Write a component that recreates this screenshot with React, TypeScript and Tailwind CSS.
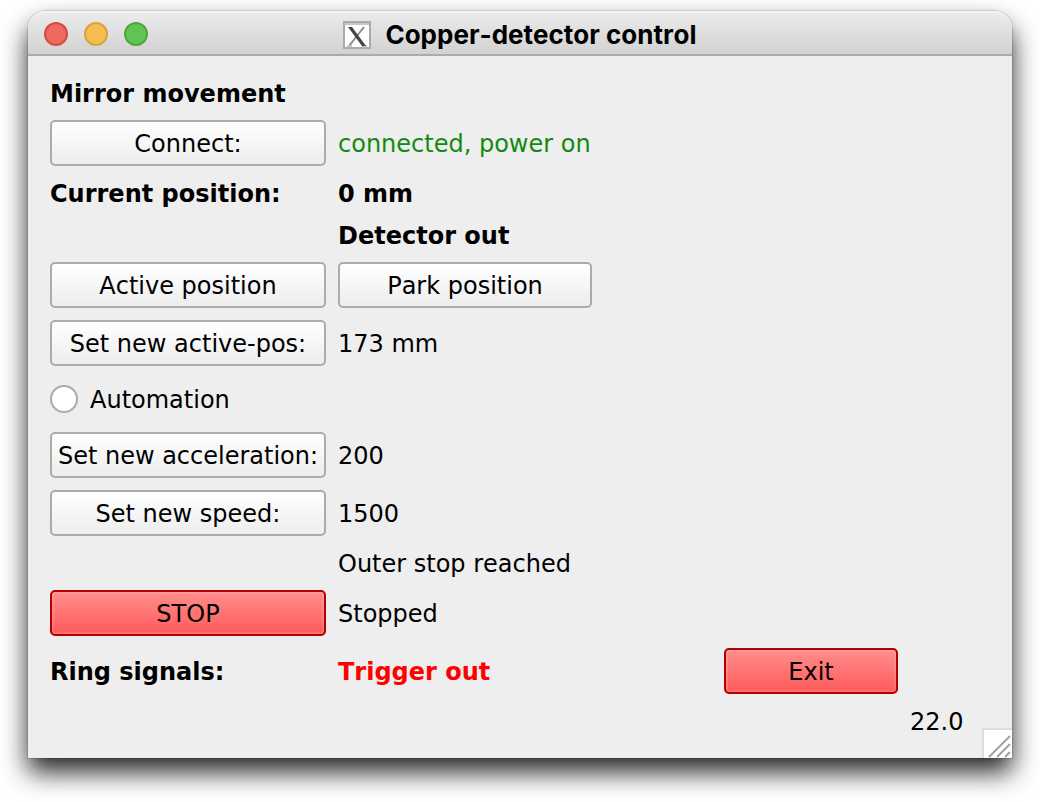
import { useState, type ReactNode } from "react";
import clsx from "clsx";

type Tone = "default" | "danger";

const tones: Record<Tone, string> = {
  default:
    "border-[#ababab] bg-linear-to-b from-white to-[#ededed] active:to-[#dcdcdc]",
  danger:
    "border-[#b40000] bg-linear-to-b from-[#ff8c8c] to-[#ff5a5a] shadow-[inset_0_0_0_2px_rgba(255,255,255,0.12)]",
};

const PushButton = ({
  children,
  tone = "default",
  className,
}: {
  children: string;
  tone?: Tone;
  className?: string;
}) => (
  <button
    type="button"
    className={clsx(
      "h-[46px] rounded-[5px] border-2 pt-0.5 text-center whitespace-nowrap",
      tones[tone],
      className
    )}
  >
    {children}
  </button>
);

const Text = ({
  children,
  className,
}: {
  children: ReactNode;
  className?: string;
}) => <span className={clsx("pt-0.5", className)}>{children}</span>;

const TitleBar = () => (
  <header className="relative flex h-[45px] items-center justify-center rounded-t-[18px] border-b-2 border-[#ababab] bg-linear-to-b from-[#ececec] to-[#d2d2d2] px-4 pt-[3px] shadow-[inset_0_2px_0_#f3f3f3]">
    <div className="absolute left-4 flex gap-4">
      <button
        type="button"
        aria-label="Close"
        className="size-6 rounded-full border-2 border-[#d14c41] bg-[#ee6a5f]"
      />
      <button
        type="button"
        aria-label="Minimize"
        className="size-6 rounded-full border-2 border-[#dca13c] bg-[#f5bd4f]"
      />
      <button
        type="button"
        aria-label="Zoom"
        className="size-6 rounded-full border-2 border-[#4ea73b] bg-[#61c454]"
      />
    </div>
    <div className="flex items-center gap-3.5 pt-0.5">
      <svg viewBox="0 0 28 28" className="size-7" aria-hidden="true">
        <rect x="1" y="1" width="26" height="26" fill="#fff" stroke="#ababab" strokeWidth="2" />
        <path d="M2 3h24" stroke="#c6c6c6" strokeWidth="2" />
        <path d="M21 6L6 25" stroke="#8a8a8a" strokeWidth="2" />
        <path d="M4 25h5M19 25h5" stroke="#c4c4c4" strokeWidth="2" />
        <path d="M5 6h4l14 19h-4z" fill="#444" />
      </svg>
      <h1 className="font-[Inter,sans-serif] text-[26px] font-bold">
        Copper-detector control
      </h1>
    </div>
  </header>
);

export default function App() {
  const [automation, setAutomation] = useState(false);

  return (
    <div className="bg-white px-7 pt-[11px] pb-11 font-['DejaVu_Sans',sans-serif] text-[24px] leading-[28px] text-black [font-kerning:none]">
      <div className="relative rounded-t-[18px] bg-[#eeeeee] shadow-[0_0_1px_1px_rgba(0,0,0,0.12),0_14px_26px_rgba(0,0,0,0.85)]">
        <TitleBar />

        <main className="grid grid-cols-[276px_254px_1fr_174px_80px] items-center gap-3 p-[22px]">
          <h2 className="col-span-5 pt-0.5 font-bold">Mirror movement</h2>

          <PushButton className="col-start-1">Connect:</PushButton>
          <Text className="col-span-4 text-[#118a11]">connected, power on</Text>

          <Text className="col-start-1 font-bold">Current position:</Text>
          <Text className="col-span-4 font-bold">0 mm</Text>

          <Text className="col-span-4 col-start-2 font-bold">Detector out</Text>

          <PushButton className="col-start-1">Active position</PushButton>
          <PushButton>Park position</PushButton>

          <PushButton className="col-start-1">Set new active-pos:</PushButton>
          <Text className="col-span-4">173 mm</Text>

          <label className="col-span-5 flex h-[42px] items-center gap-3">
            <input
              type="radio"
              checked={automation}
              onChange={() => setAutomation(true)}
              className="size-7 appearance-none rounded-full border-2 border-[#ababab] bg-white checked:bg-[#555] checked:shadow-[inset_0_0_0_5px_white]"
            />
            <Text>Automation</Text>
          </label>

          <PushButton className="col-start-1">Set new acceleration:</PushButton>
          <Text className="col-span-4">200</Text>

          <PushButton className="col-start-1">Set new speed:</PushButton>
          <Text className="col-span-4">1500</Text>

          <Text className="col-span-4 col-start-2">Outer stop reached</Text>

          <PushButton tone="danger" className="col-start-1">
            STOP
          </PushButton>
          <Text className="col-span-4">Stopped</Text>

          <Text className="col-start-1 font-bold">Ring signals:</Text>
          <Text className="font-bold text-[#ff0000]">Trigger out</Text>
          <PushButton tone="danger" className="col-start-4">
            Exit
          </PushButton>

          <Text className="col-start-5 row-start-13">22.0</Text>
        </main>

        {/* resize grip */}
        <div className="absolute right-0 bottom-0 size-[30px] border-t-2 border-l-2 border-[#dedede] bg-white">
          <svg viewBox="0 0 28 28" className="size-7" aria-hidden="true">
            <path
              d="M5 27L26 6M13 27L26 14M21 27L26 22"
              stroke="#a2a2a2"
              strokeWidth="2"
              fill="none"
            />
          </svg>
        </div>
      </div>
    </div>
  );
}
